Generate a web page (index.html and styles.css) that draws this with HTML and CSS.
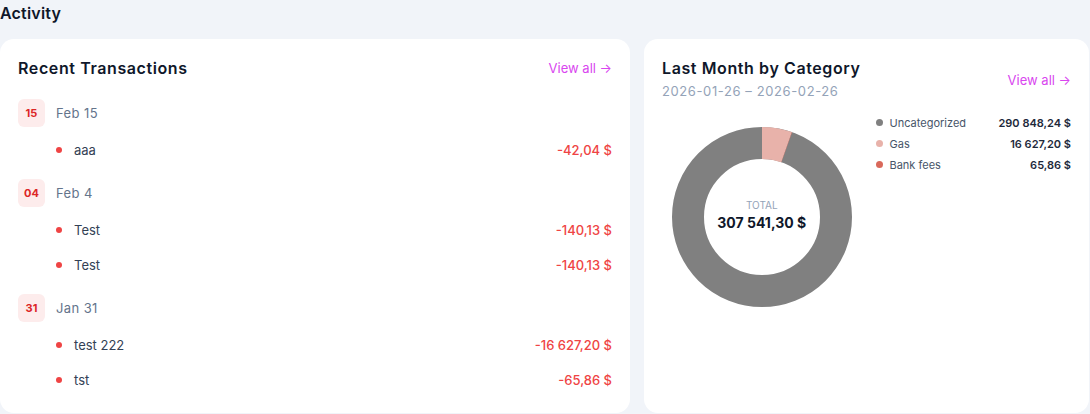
FILE: index.html
```html
<!DOCTYPE html>
<html lang="en">
<head>
    <meta charset="UTF-8">
    <meta name="viewport" content="width=device-width, initial-scale=1.0">
    <title>Activity</title>
    <link rel="stylesheet" href="styles.css">
</head>
<body>
    <h2 class="section-title">Activity</h2>
    <div class="activity-grid">
        <!-- Recent transactions -->
        <section class="card">
            <div class="card-head">
                <h3 class="card-title">Recent Transactions</h3>
                <a class="view-all" href="#">View all &rarr;</a>
            </div>

            <div class="day">
                <div class="day-head">
                    <span class="day-badge">15</span>
                    <span class="day-label">Feb 15</span>
                </div>
                <ul class="tx-list">
                    <li class="tx"><span class="tx-dot"></span><span class="tx-name">aaa</span><span class="tx-amount">-42,04 $</span></li>
                </ul>
            </div>

            <div class="day">
                <div class="day-head">
                    <span class="day-badge">04</span>
                    <span class="day-label">Feb 4</span>
                </div>
                <ul class="tx-list">
                    <li class="tx"><span class="tx-dot"></span><span class="tx-name">Test</span><span class="tx-amount">-140,13 $</span></li>
                    <li class="tx"><span class="tx-dot"></span><span class="tx-name">Test</span><span class="tx-amount">-140,13 $</span></li>
                </ul>
            </div>

            <div class="day">
                <div class="day-head">
                    <span class="day-badge">31</span>
                    <span class="day-label">Jan 31</span>
                </div>
                <ul class="tx-list">
                    <li class="tx"><span class="tx-dot"></span><span class="tx-name">test 222</span><span class="tx-amount">-16 627,20 $</span></li>
                    <li class="tx"><span class="tx-dot"></span><span class="tx-name">tst</span><span class="tx-amount">-65,86 $</span></li>
                </ul>
            </div>
        </section>

        <!-- Category breakdown -->
        <section class="card">
            <div class="card-head card-head-center">
                <div>
                    <h3 class="card-title">Last Month by Category</h3>
                    <div class="card-sub">2026-01-26 &ndash; 2026-02-26</div>
                </div>
                <a class="view-all" href="#">View all &rarr;</a>
            </div>

            <div class="chart-row">
                <div class="chart-wrap">
                    <div class="donut">
                        <svg width="180" height="180" viewBox="0 0 180 180">
                            <g transform="rotate(-90 90 90)">
                                <circle cx="90" cy="90" r="74" fill="none" stroke="#808080" stroke-width="32"/>
                                <circle cx="90" cy="90" r="74" fill="none" stroke="#e8b2aa" stroke-width="32" stroke-dasharray="25.1 465"/>
                                <circle cx="90" cy="90" r="74" fill="none" stroke="#d9695b" stroke-width="32" stroke-dasharray="0.2 465" stroke-dashoffset="-25.1"/>
                            </g>
                        </svg>
                        <div class="donut-center">
                            <div class="donut-label">TOTAL</div>
                            <div class="donut-value">307 541,30 $</div>
                        </div>
                    </div>
                </div>

                <ul class="legend">
                    <li class="legend-item"><span class="legend-dot dot-uncat"></span><span class="legend-name">Uncategorized</span><span class="legend-value">290 848,24 $</span></li>
                    <li class="legend-item"><span class="legend-dot dot-gas"></span><span class="legend-name">Gas</span><span class="legend-value">16 627,20 $</span></li>
                    <li class="legend-item"><span class="legend-dot dot-fees"></span><span class="legend-name">Bank fees</span><span class="legend-value">65,86 $</span></li>
                </ul>
            </div>
        </section>
    </div>
</body>
</html>
```

FILE: styles.css
```css
body {
    margin: 0;
    font-family: Inter, "Noto Sans", sans-serif;
    background-color: #f1f4f9;
    color: #0f172a;
}
.section-title {
    margin: 0;
    padding-top: 4px;
    font-size: 16px;
    line-height: 18px;
    font-weight: 600;
    letter-spacing: 0.2px;
    height: 35px;
}
.activity-grid {
    display: grid;
    grid-template-columns: 630px 445px;
    gap: 14px;
}
.card {
    background-color: #fff;
    border-radius: 14px;
    padding: 20px 18px 14px;
    height: 340px;
}
.card-head {
    display: flex;
    justify-content: space-between;
    align-items: flex-start;
    margin-bottom: 22px;
}
.card-head-center {
    align-items: center;
    margin-bottom: 12px;
}
.card-title {
    margin: 0;
    font-size: 16px;
    line-height: 18px;
    font-weight: 600;
    letter-spacing: 0.6px;
    color: #0f172a;
}
.card-sub {
    margin-top: 5px;
    font-size: 13px;
    line-height: 18px;
    letter-spacing: 0.6px;
    color: #94a3b8;
}
.view-all {
    font-size: 13px;
    line-height: 18px;
    color: #d946ef;
    text-decoration: none;
}
.day {
    margin-bottom: 12px;
}
.day-head {
    display: flex;
    align-items: center;
    gap: 11px;
    height: 28px;
}
.day-badge {
    width: 27px;
    height: 28px;
    display: flex;
    justify-content: center;
    align-items: center;
    border-radius: 6px;
    background-color: #fdecec;
    color: #dc2626;
    font-size: 11px;
    font-weight: 700;
}
.day-label {
    font-size: 13px;
    letter-spacing: 0.4px;
    color: #64748b;
}
.tx-list {
    list-style: none;
    margin: 5px 0 0;
    padding: 0;
}
.tx {
    display: flex;
    align-items: center;
    height: 35px;
    padding-left: 38px;
    font-size: 13px;
}
.tx-dot {
    width: 6px;
    height: 6px;
    border-radius: 50%;
    background-color: #ef4444;
    margin-right: 12px;
}
.tx-name {
    color: #334155;
}
.tx-amount {
    margin-left: auto;
    font-weight: 500;
    color: #ef4444;
}
.chart-row {
    display: flex;
    gap: 14px;
}
.chart-wrap {
    width: 200px;
    display: flex;
    justify-content: center;
    padding-top: 15px;
}
.donut {
    position: relative;
    width: 180px;
    height: 180px;
}
.donut svg {
    display: block;
}
.donut-center {
    position: absolute;
    inset: 0;
    padding-bottom: 4px;
    display: flex;
    flex-direction: column;
    justify-content: center;
    align-items: center;
}
.donut-label {
    margin-bottom: 2px;
    font-size: 10px;
    line-height: 14px;
    color: #94a3b8;
}
.donut-value {
    font-size: 14px;
    line-height: 18px;
    font-weight: 700;
    color: #0f172a;
}
.legend {
    list-style: none;
    margin: 0;
    padding: 0;
    width: 196px;
}
.legend-item {
    display: flex;
    align-items: center;
    height: 21px;
    font-size: 11px;
}
.legend-dot {
    width: 7px;
    height: 7px;
    border-radius: 50%;
    margin-right: 7px;
}
.dot-uncat { background-color: #808080; }
.dot-gas { background-color: #e8b2aa; }
.dot-fees { background-color: #d9695b; }
.legend-name {
    color: #475569;
}
.legend-value {
    margin-left: auto;
    font-weight: 600;
    color: #1e293b;
}
```
